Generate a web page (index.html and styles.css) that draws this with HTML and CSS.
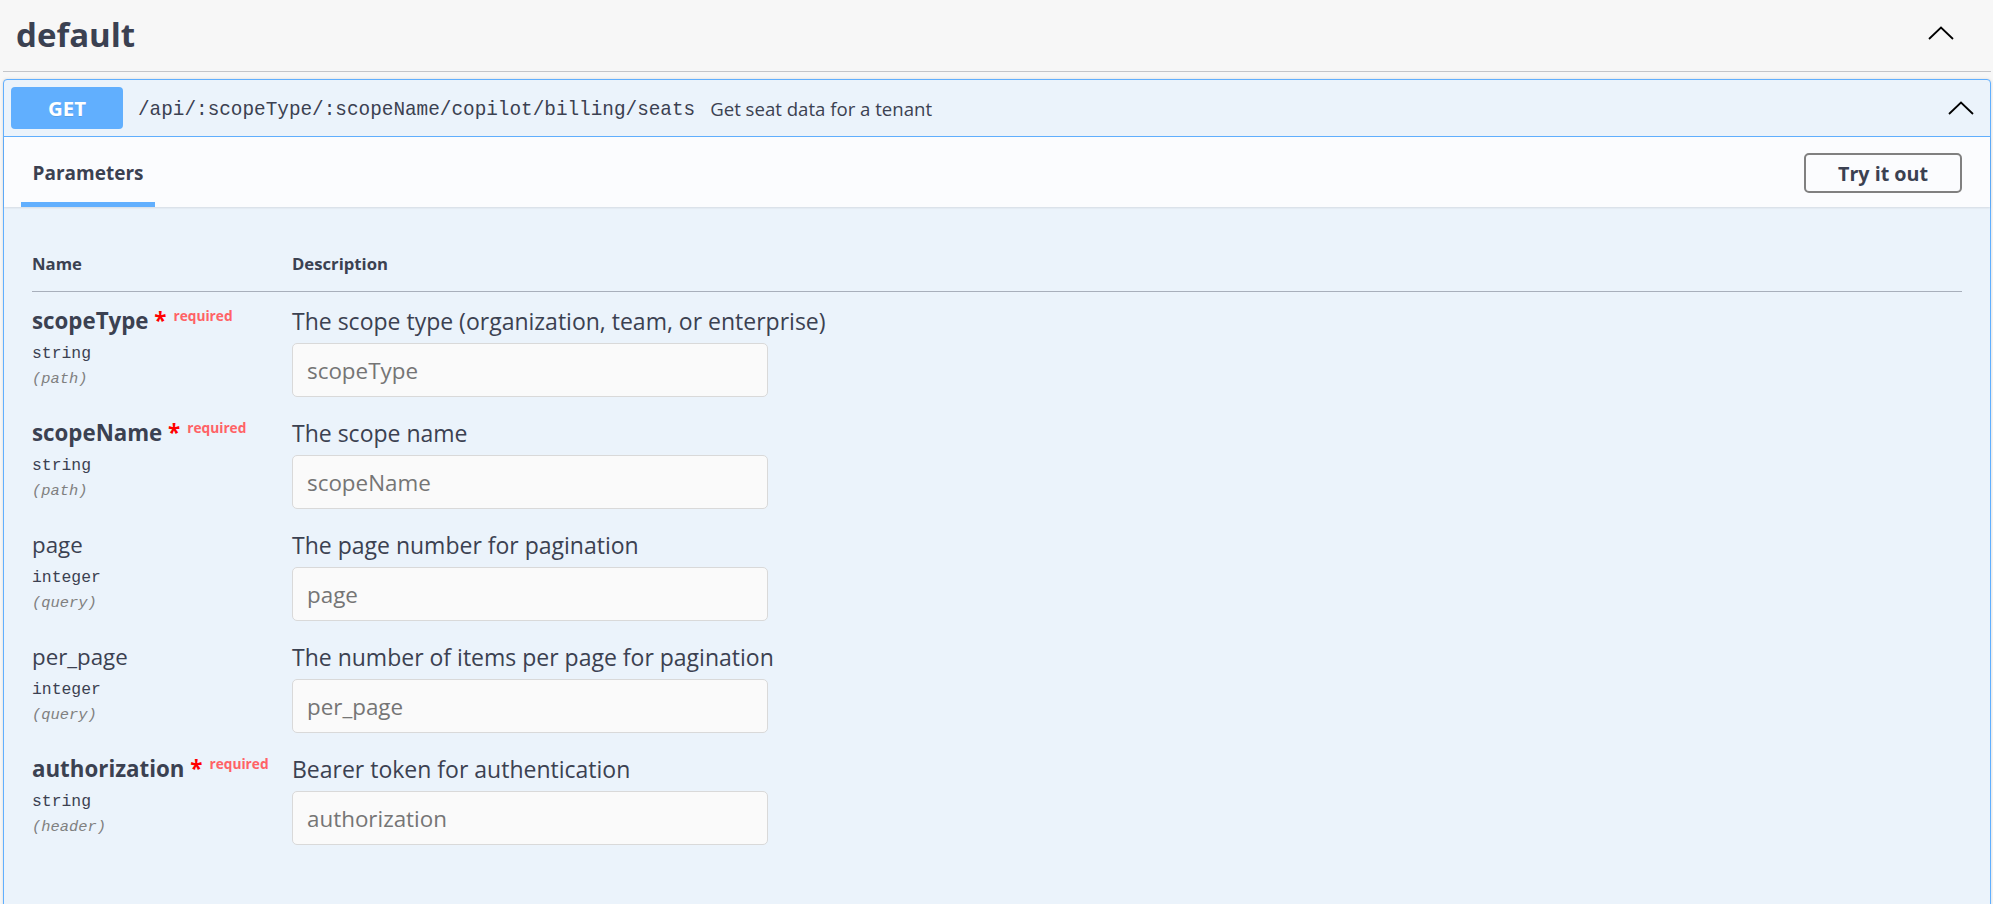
FILE: index.html
```html
<!DOCTYPE html>
<html lang="en">
<head>
<meta charset="utf-8">
<title>default</title>
<link rel="stylesheet" href="styles.css">
</head>
<body>
<div class="page">
  <div class="tag-header">
    <h3 class="tag-title">default</h3>
    <svg class="chev tag-chev" width="26" height="14" viewBox="0 0 26 14" aria-hidden="true"><polyline points="1,13 13,1.5 25,13" fill="none" stroke="#000" stroke-width="1.8"/></svg>
  </div>

  <div class="opblock">
    <div class="summary">
      <span class="method">GET</span>
      <span class="path">/api/:scopeType/:scopeName/copilot/billing/seats</span>
      <span class="summary-desc">Get seat data for a tenant</span>
      <svg class="chev op-chev" width="26" height="14" viewBox="0 0 26 14" aria-hidden="true"><polyline points="1,13 13,1.5 25,13" fill="none" stroke="#000" stroke-width="1.8"/></svg>
    </div>

    <div class="section-header">
      <div class="tab">
        <span class="tab-label">Parameters</span>
        <span class="tab-line"></span>
      </div>
      <button class="try-btn" type="button">Try it out</button>
    </div>

    <div class="table-container">
      <div class="params">
        <div class="head">Name</div>
        <div class="head">Description</div>

        <div class="pcol">
          <div class="pname required">scopeType<span class="star">&nbsp;*</span><span class="req">required</span></div>
          <div class="ptype">string</div>
          <div class="pin">(path)</div>
        </div>
        <div class="dcol">
          <div class="pdesc">The scope type (organization, team, or enterprise)</div>
          <input class="pinput" type="text" placeholder="scopeType">
        </div>

        <div class="pcol">
          <div class="pname required">scopeName<span class="star">&nbsp;*</span><span class="req">required</span></div>
          <div class="ptype">string</div>
          <div class="pin">(path)</div>
        </div>
        <div class="dcol">
          <div class="pdesc">The scope name</div>
          <input class="pinput" type="text" placeholder="scopeName">
        </div>

        <div class="pcol">
          <div class="pname">page</div>
          <div class="ptype">integer</div>
          <div class="pin">(query)</div>
        </div>
        <div class="dcol">
          <div class="pdesc">The page number for pagination</div>
          <input class="pinput" type="text" placeholder="page">
        </div>

        <div class="pcol">
          <div class="pname">per_page</div>
          <div class="ptype">integer</div>
          <div class="pin">(query)</div>
        </div>
        <div class="dcol">
          <div class="pdesc">The number of items per page for pagination</div>
          <input class="pinput" type="text" placeholder="per_page">
        </div>

        <div class="pcol">
          <div class="pname required">authorization<span class="star">&nbsp;*</span><span class="req">required</span></div>
          <div class="ptype">string</div>
          <div class="pin">(header)</div>
        </div>
        <div class="dcol">
          <div class="pdesc">Bearer token for authentication</div>
          <input class="pinput" type="text" placeholder="authorization">
        </div>
      </div>
    </div>
  </div>
</div>
</body>
</html>
```
FILE: styles.css
```css
html, body {
  margin: 0;
  padding: 0;
  overflow: hidden;
  background: #f7f7f7;
}
body {
  font-family: "Open Sans", "Noto Sans", sans-serif;
  color: #3b4151;
}
.page {
  padding: 0 2px 0 3px;
}

/* tag header */
.tag-header {
  display: flex;
  align-items: center;
  justify-content: space-between;
  padding: 13px 37px 14px 13px;
  border-bottom: 1px solid #c4c5c9;
}
.tag-title {
  margin: 0;
  font-size: 33px;
  font-weight: 700;
  line-height: 44px;
  color: #3b4151;
}
.chev { display: block; flex: none; }
.tag-chev { margin-bottom: 4px; }

/* operation block */
.opblock {
  margin-top: 7px;
  border: 1px solid #61affe;
  border-radius: 4px;
  background: #ebf3fb;
  box-shadow: 0 0 3px rgba(0, 0, 0, 0.12);
}
.summary {
  display: flex;
  align-items: center;
  padding: 7px 16px 7px 7px;
  border-bottom: 1px solid #61affe;
}
.method {
  flex: none;
  width: 112px;
  height: 42px;
  line-height: 42px;
  border-radius: 4px;
  background: #61affe;
  color: #fff;
  font-size: 20.4px;
  font-weight: 700;
  text-align: center;
  text-shadow: 0 1px 0 rgba(0, 0, 0, 0.1);
}
.path {
  margin-left: 15px;
  padding-top: 4px;
  font-family: "Liberation Mono", monospace;
  font-size: 19.35px;
  color: #3b4151;
}
.summary-desc {
  flex: 1;
  margin-left: 15px;
  font-size: 18.6px;
  color: #3b4151;
}

/* section header with tab */
.section-header {
  display: flex;
  align-items: center;
  justify-content: space-between;
  height: 70px;
  padding: 0 28px 0 17px;
  background: #fbfcfe;
  box-shadow: 0 1px 2px rgba(0, 0, 0, 0.1);
}
.tab {
  align-self: stretch;
  display: flex;
  flex-direction: column;
  width: 134px;
}
.tab-label {
  padding-top: 23px;
  line-height: 26px;
  font-size: 19px;
  font-weight: 700;
  text-align: center;
}
.tab-line {
  margin-top: auto;
  height: 5px;
  background: #61affe;
}
.try-btn {
  margin-top: 2px;
  width: 158px;
  height: 40px;
  border: 2px solid #808080;
  border-radius: 5px;
  background: transparent;
  font-family: "Open Sans", "Noto Sans", sans-serif;
  font-size: 19.7px;
  font-weight: 700;
  color: #3b4151;
  padding: 0;
}

/* parameters table */
.table-container {
  padding: 28px 28px 80px;
}
.params {
  display: grid;
  grid-template-columns: 260px 1fr;
}
.head {
  padding: 18px 0 16px;
  line-height: 22px;
  font-size: 16.7px;
  font-weight: 700;
  border-bottom: 1px solid #a8afbb;
}
.pcol, .dcol {
  padding: 14px 0 7px;
}
.pname {
  height: 30px;
  line-height: 30px;
  font-size: 22.3px;
  font-weight: 400;
  white-space: nowrap;
}
.pname.required { font-weight: 700; }
.star { color: #f00; }
.req {
  padding-left: 7px;
  line-height: 0;
  vertical-align: 8px;
  font-size: 13.7px;
  font-weight: 700;
  color: #ff6266;
}
.ptype {
  padding-top: 7px;
  line-height: 22px;
  font-family: "Liberation Mono", monospace;
  font-size: 16.4px;
  color: #3b4151;
}
.pin {
  padding-top: 3px;
  line-height: 22px;
  font-family: "Liberation Mono", monospace;
  font-size: 15.4px;
  font-style: italic;
  color: #808080;
}
.pdesc {
  line-height: 30px;
  font-size: 23px;
  color: #3b4151;
}
.pinput {
  display: block;
  box-sizing: border-box;
  margin: 7px 0 0;
  width: 476px;
  height: 54px;
  padding: 0 14px;
  border: 1px solid #d9d9d9;
  border-radius: 5px;
  background: #fafafa;
  font-family: "Open Sans", "Noto Sans", sans-serif;
  font-size: 22.4px;
  color: #3b4151;
  outline: none;
}
.pinput::placeholder {
  color: #757575;
  opacity: 1;
}
```
